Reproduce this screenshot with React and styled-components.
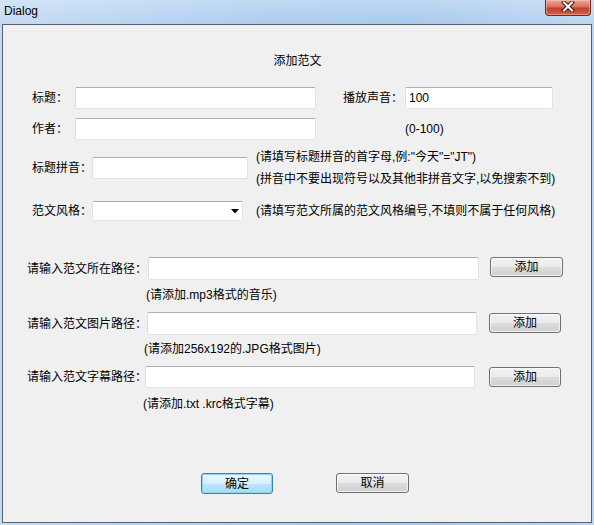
import React from "react";
import styled, { createGlobalStyle } from "styled-components";

const GlobalStyle = createGlobalStyle`
  html, body {
    margin: 0;
    padding: 0;
    background: #a9caef;
  }
  * {
    box-sizing: border-box;
  }
`;

const FONT = `"Liberation Sans", "Noto Sans CJK SC", sans-serif`;

const App = () => {
  return (
    <>
      <GlobalStyle />
      <Window>
        <TitleBar>
          <Caption>Dialog</Caption>
          <CloseButton>
            <svg width="14" height="11" viewBox="0 0 14 11">
              <path d="M3 1.5 L11 9.5 M11 1.5 L3 9.5" stroke="#3b1a14" strokeWidth="4" strokeLinecap="square" />
              <path d="M3 1.5 L11 9.5 M11 1.5 L3 9.5" stroke="#ffffff" strokeWidth="2" strokeLinecap="square" />
            </svg>
          </CloseButton>
        </TitleBar>
        <Client>
          <Heading>添加范文</Heading>

          <Row $mt={18} $pl={29}>
            <Label $w={43}>标题：</Label>
            <TextBox $w={241} />
            <Label $w={62} $ml={27}>播放声音：</Label>
            <TextBox $w={148} defaultValue="100" />
          </Row>

          <Row $mt={9} $pl={29}>
            <Label $w={43}>作者：</Label>
            <TextBox $w={241} />
            <Note $ml={89}>(0-100)</Note>
          </Row>

          <Row $mt={6} $pl={29}>
            <Label $w={60}>标题拼音：</Label>
            <TextBox $w={156} />
            <HintBlock $ml={8}>
              <HintLine>(请填写标题拼音的首字母,例:"今天"="JT")</HintLine>
              <HintLine>(拼音中不要出现符号以及其他非拼音文字,以免搜索不到)</HintLine>
            </HintBlock>
          </Row>

          <Row $mt={11} $pl={29}>
            <Label $w={60}>范文风格：</Label>
            <Combo $w={151}>
              <svg width="8" height="5" viewBox="0 0 8 5">
                <path d="M0 0 H8 L4 4.5 Z" fill="#000" />
              </svg>
            </Combo>
            <Note $ml={13}>(请填写范文所属的范文风格编号,不填则不属于任何风格)</Note>
          </Row>

          <PathRow $mt={36} $pl={24}>
            <Label $w={121}>请输入范文所在路径：</Label>
            <TextBox $w={331} $h={23} />
            <PushButton $w={73} $ml={11}>添加</PushButton>
          </PathRow>
          <Hint $mt={7} $pl={143}>(请添加.mp3格式的音乐)</Hint>

          <PathRow $mt={9} $pl={24}>
            <Label $w={120}>请输入范文图片路径：</Label>
            <TextBox $w={330} $h={23} />
            <PushButton $w={72} $ml={12} $dy={1}>添加</PushButton>
          </PathRow>
          <Hint $mt={6} $pl={141}>(请添加256x192的.JPG格式图片)</Hint>

          <PathRow $mt={9} $pl={24}>
            <Label $w={118}>请输入范文字幕路径：</Label>
            <TextBox $w={330} />
            <PushButton $w={72} $ml={14} $dy={1}>添加</PushButton>
          </PathRow>
          <Hint $mt={8} $pl={140}>(请添加.txt .krc格式字幕)</Hint>

          <Footer>
            <PushButton $w={72} $primary>确定</PushButton>
            <PushButton $w={73} $ml={63}>取消</PushButton>
          </Footer>
        </Client>
      </Window>
    </>
  );
};

const Window = styled.div`
  width: 594px;
  height: 525px;
  display: flex;
  flex-direction: column;
  background: linear-gradient(to right, #c5dbf3 0%, #abcdf0 45%, #a8caee 70%, #bcd6f2 100%);
  font-family: ${FONT};
`;

const TitleBar = styled.div`
  height: 24px;
  display: flex;
  align-items: flex-start;
  justify-content: space-between;
  padding: 0 2px 0 4px;
  background: linear-gradient(to bottom, rgba(255, 255, 255, 0.25), rgba(255, 255, 255, 0));
`;

const Caption = styled.div`
  margin-top: 3px;
  font-size: 12px;
  line-height: 16px;
  color: #000;
`;

const CloseButton = styled.div`
  width: 46px;
  height: 16px;
  margin-right: 1px;
  display: flex;
  align-items: center;
  justify-content: center;
  padding-bottom: 2px;
  border: 1px solid #6b2a20;
  border-top: none;
  border-radius: 0 0 4px 4px;
  background: linear-gradient(to bottom, #e9a898 0%, #d8705d 45%, #c2402a 55%, #d0644c 100%);
  box-shadow: inset 0 0 0 1px rgba(255, 210, 200, 0.45);
`;

const Client = styled.div`
  flex: 1;
  margin: 0 2px 2px 2px;
  border: 1px solid #56626f;
  background: #f0f0f0;
  display: flex;
  flex-direction: column;
  font-size: 12px;
  color: #000;
`;

const Heading = styled.div`
  margin-top: 28px;
  line-height: 16px;
  text-align: center;
  padding-left: 1px;
`;

const Row = styled.div`
  display: flex;
  align-items: center;
  margin-top: ${(p) => p.$mt || 0}px;
  padding-left: ${(p) => p.$pl || 0}px;
`;

const PathRow = styled(Row)`
  align-items: flex-start;
`;

const Label = styled.div`
  flex: none;
  width: ${(p) => p.$w}px;
  margin-left: ${(p) => p.$ml || 0}px;
  line-height: 16px;
  white-space: nowrap;
  align-self: center;
`;

const TextBox = styled.input`
  flex: none;
  width: ${(p) => p.$w}px;
  height: ${(p) => p.$h || 22}px;
  margin: 0;
  padding: 0 3px;
  font-family: ${FONT};
  font-size: 12px;
  color: #000;
  background: #fff;
  border: 1px solid #e2e3ea;
  border-top-color: #abadb3;
  border-left-color: #dbdfe6;
  border-radius: 2px;
  outline: none;
`;

const Combo = styled.div`
  flex: none;
  width: ${(p) => p.$w}px;
  height: 20px;
  display: flex;
  align-items: center;
  justify-content: flex-end;
  padding-right: 3px;
  background: #fff;
  border: 1px solid #e2e3ea;
  border-top-color: #abadb3;
  border-radius: 2px;
`;

const Note = styled.div`
  margin-left: ${(p) => p.$ml || 0}px;
  line-height: 16px;
  white-space: nowrap;
`;

const HintBlock = styled.div`
  margin-left: ${(p) => p.$ml || 0}px;
  display: flex;
  flex-direction: column;
`;

const HintLine = styled.div`
  line-height: 22px;
  white-space: nowrap;
`;

const Hint = styled.div`
  margin-top: ${(p) => p.$mt || 0}px;
  padding-left: ${(p) => p.$pl || 0}px;
  line-height: 16px;
  white-space: nowrap;
`;

const PushButton = styled.div`
  flex: none;
  width: ${(p) => p.$w}px;
  height: ${(p) => (p.$primary ? 21 : 20)}px;
  margin-left: ${(p) => p.$ml || 0}px;
  margin-top: ${(p) => p.$dy || 0}px;
  display: flex;
  align-items: center;
  justify-content: center;
  font-size: 12px;
  line-height: 16px;
  color: #000;
  border-radius: 3px;
  border: 1px solid ${(p) => (p.$primary ? "#3c7fb1" : "#707070")};
  background: ${(p) =>
    p.$primary
      ? "linear-gradient(to bottom, #eaf6fd 0%, #d9f0fc 50%, #bee6fd 51%, #a7d9f5 100%)"
      : "linear-gradient(to bottom, #f2f2f2 0%, #ebebeb 50%, #dddddd 51%, #cfcfcf 100%)"};
  box-shadow: ${(p) =>
    p.$primary ? "inset 0 0 0 1px #8fd3f7" : "inset 0 0 0 1px rgba(255, 255, 255, 0.7)"};
`;

const Footer = styled.div`
  display: flex;
  margin-top: 61px;
  padding-left: 198px;
`;

export default App;
